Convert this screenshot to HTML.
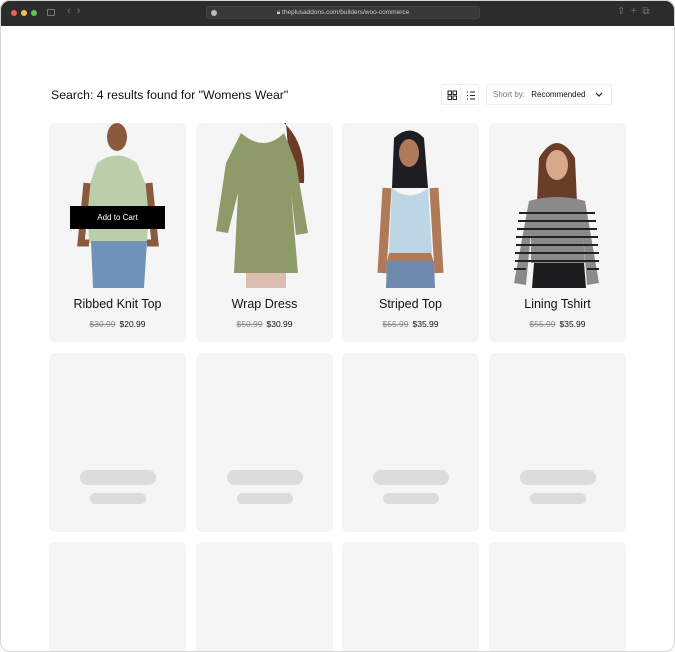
<!DOCTYPE html>
<html><head><style>
*{margin:0;padding:0;box-sizing:border-box}
body{width:675px;height:652px;background:#fff;font-family:"Liberation Sans",sans-serif;position:relative;overflow:hidden}
.win{position:absolute;left:0;top:0;width:675px;height:652px;border-radius:10px;overflow:hidden;background:#fff}
.frame{position:absolute;left:0;top:0;width:675px;height:652px;border:1px solid #d6d6d6;border-radius:10px;pointer-events:none}
.bar{position:absolute;left:0;top:0;width:675px;height:26px;background:#2c2c2c}
.dot{position:absolute;top:10px;width:6px;height:6px;border-radius:50%}
.url{position:absolute;left:206px;top:6px;width:274px;height:13px;border-radius:3px;background:#383838;border:1px solid #444;color:#ccc;font-size:6.5px;text-align:center;line-height:12px}
h1{position:absolute;left:51px;top:88px;font-size:12.3px;font-weight:normal;color:#111;font-family:"Comic Sans MS","Liberation Sans",sans-serif}
.vw{position:absolute;left:441px;top:84px;width:38px;height:21px;border:1px solid #eee;border-radius:2px}
.sort{position:absolute;left:486px;top:84px;width:126px;height:21px;border:1px solid #eee;border-radius:2px;font-size:8px;line-height:19px;padding-left:6px;color:#777}
.sort b{font-weight:normal;color:#111;margin-left:4px}
.card{position:absolute;width:137px;background:#f5f5f5;border-radius:6px;overflow:hidden}
.t{position:absolute;left:0;width:100%;text-align:center;font-size:12.5px;color:#111;top:174px}
.p{position:absolute;left:0;width:100%;text-align:center;font-size:8.5px;top:196px;color:#111}
.p s{color:#888;margin-right:4px}
.s1{position:absolute;left:31px;width:76px;height:15px;border-radius:8px;background:#dcdcdc;top:117px}
.s2{position:absolute;left:41px;width:56px;height:11px;border-radius:6px;background:#dcdcdc;top:140px}
.cart{position:absolute;left:21px;top:83px;width:95px;height:23px;background:#000;color:#fff;font-size:8px;text-align:center;line-height:23px;font-family:"Comic Sans MS","Liberation Sans",sans-serif}
</style></head><body><div class="win">
<div class="bar">
<div class="dot" style="left:11px;background:#ee5f58"></div>
<div class="dot" style="left:21px;background:#f4be4f"></div>
<div class="dot" style="left:31px;background:#5ec454"></div>
<div style="position:absolute;left:47px;top:9px;width:8px;height:7px;border:1px solid #777;border-radius:1px"></div>
<div style="position:absolute;left:67px;top:5px;color:#777;font-size:11px">‹ &nbsp;›</div>
<div class="url"><span style="position:absolute;left:4px;top:3px;width:6px;height:6px;border-radius:50%;background:#bbb"></span>🔒︎ theplusaddons.com/builders/woo-commerce</div>
<div style="position:absolute;left:617px;top:6px;color:#777;font-size:10px">⇪ &nbsp;+ &nbsp;⧉</div>
</div>
<h1>Search: 4 results found for "Womens Wear"</h1>
<div class="vw"><svg width="38" height="21"><g fill="none" stroke="#222" stroke-width="1"><rect x="6" y="6" width="3.5" height="3.5"/><rect x="11" y="6" width="3.5" height="3.5"/><rect x="6" y="11" width="3.5" height="3.5"/><rect x="11" y="11" width="3.5" height="3.5"/><path d="M19 1V20" stroke="#eee"/><path d="M25 7h1M28 7h5M25 10.5h1M28 10.5h5M25 14h1M28 14h5"/></g></svg></div>
<div class="sort">Short by: <b>Recommended</b><svg style="position:absolute;right:8px;top:7px" width="8" height="6"><path d="M1 1l3 3 3-3" stroke="#222" fill="none" stroke-width="1.2"/></svg></div>

<div class="card" style="left:49px;top:123px;height:219px">
<svg width="137" height="165" style="position:absolute;top:0;left:0"><ellipse cx="68" cy="14" rx="10" ry="14" fill="#8a5a3e"/><path d="M48 40 Q68 25 88 40 L100 70 L98 120 L40 120 L38 70Z" fill="#b9cfaa"/><path d="M42 118h56l-3 47H44z" fill="#6f93b8"/><path d="M38 60l-6 60 8 0M100 60l6 60-8 0" stroke="#8a5a3e" stroke-width="7" fill="none"/></svg>
<div class="cart">Add to Cart</div>
<div class="t">Ribbed Knit Top</div><div class="p"><s>$30.99</s>$20.99</div></div>

<div class="card" style="left:196px;top:123px;height:219px">
<svg width="137" height="165" style="position:absolute;top:0;left:0"><path d="M88 0 Q110 20 108 60 L95 60 L90 0Z" fill="#6b3b25"/><path d="M45 10 Q68 30 88 10 L100 40 L112 110 L100 112 L95 70 L102 150 L38 150 L42 70 L32 110 L20 108 L30 40Z" fill="#8e9a68"/><path d="M50 150h40v15H50z" fill="#c99a80" opacity=".6"/></svg>
<div class="t">Wrap Dress</div><div class="p"><s>$50.99</s>$30.99</div></div>

<div class="card" style="left:342px;top:123px;height:219px">
<svg width="137" height="165" style="position:absolute;top:0;left:0"><path d="M52 15 Q68 0 82 15 L86 65 L50 65Z" fill="#1e1e22"/><ellipse cx="67" cy="30" rx="10" ry="14" fill="#b07a58"/><path d="M45 65 L40 150 M92 65 L97 150" stroke="#b07a58" stroke-width="9"/><path d="M50 65 Q68 80 86 65 L90 130 L47 130Z" fill="#bdd6e6"/><path d="M47 130h42l3 10H45z" fill="#b07a58"/><path d="M45 138h47l1 27H44z" fill="#6e8aad"/></svg>
<div class="t">Striped Top</div><div class="p"><s>$55.99</s>$35.99</div></div>

<div class="card" style="left:489px;top:123px;height:219px">
<svg width="137" height="165" style="position:absolute;top:0;left:0"><path d="M50 35 Q68 5 86 35 L88 80 L48 80Z" fill="#6a3d28"/><ellipse cx="68" cy="42" rx="11" ry="15" fill="#d8a88a"/><path d="M40 78 Q68 70 96 78 L110 160 L98 162 L94 110 L96 140 L42 140 L42 110 L37 162 L25 160Z" fill="#8a8a8a"/><g stroke="#222" stroke-width="2"><path d="M30 90h76M29 98h78M28 106h80M27 114h82M27 122h82M26 130h84M26 138h84M25 146h12M98 146h12"/></g><path d="M45 140h50l2 25H43z" fill="#1d1d1f"/></svg>
<div class="t">Lining Tshirt</div><div class="p"><s>$55.99</s>$35.99</div></div>

<div class="card" style="left:49px;top:353px;height:179px"><div class="s1"></div><div class="s2"></div></div>
<div class="card" style="left:196px;top:353px;height:179px"><div class="s1"></div><div class="s2"></div></div>
<div class="card" style="left:342px;top:353px;height:179px"><div class="s1"></div><div class="s2"></div></div>
<div class="card" style="left:489px;top:353px;height:179px"><div class="s1"></div><div class="s2"></div></div>
<div class="card" style="left:49px;top:542px;height:120px"></div>
<div class="card" style="left:196px;top:542px;height:120px"></div>
<div class="card" style="left:342px;top:542px;height:120px"></div>
<div class="card" style="left:489px;top:542px;height:120px"></div>
</div><div class="frame"></div></body></html>
